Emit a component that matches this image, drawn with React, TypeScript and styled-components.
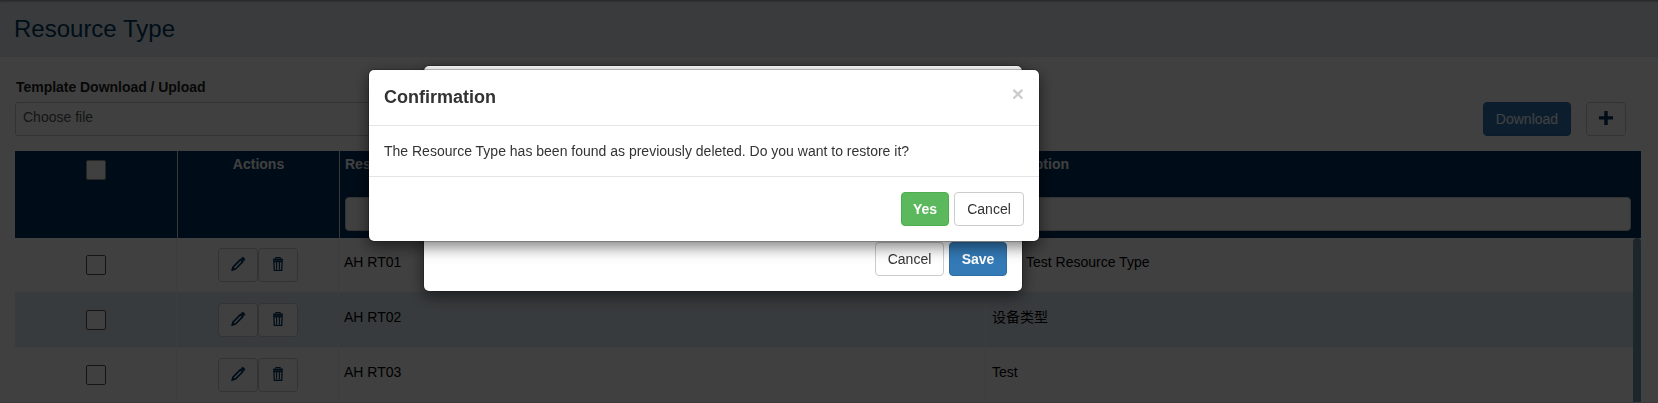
import React from "react";
import styled, { createGlobalStyle, css } from "styled-components";

const Global = createGlobalStyle`
  * { box-sizing: border-box; }
  html, body { margin: 0; height: 100%; overflow: hidden; background: #fff; }
  body {
    font-family: "Liberation Sans", Arial, "Noto Sans CJK SC", sans-serif;
    font-size: 14px;
    line-height: 20px;
    color: #333;
  }
`;

const Page = styled.div`
  height: 403px;
  overflow: hidden;
  display: flex;
  flex-direction: column;
  border-bottom: 1px solid #f4dfe6;
`;

const PageHeader = styled.header`
  height: 57px;
  flex: none;
  padding: 16px 14px 0;
  background: #e6ecf2;
  border-bottom: 1px solid #e2e5ea;
  box-shadow: inset 0 3px 3px -2px rgba(0, 0, 0, 0.45);
`;

const Title = styled.h1`
  margin: 0;
  font-size: 24px;
  line-height: 26px;
  font-weight: 400;
  color: #003a62;
`;

const Content = styled.main`
  flex: 1;
  min-height: 0;
  padding: 20px 17px 0 15px;
  display: flex;
  flex-direction: column;
`;

const FieldLabel = styled.label`
  display: block;
  padding-left: 1px;
  margin-bottom: 5px;
  font-weight: 700;
  letter-spacing: -0.03px;
  color: #222;
`;

const Toolbar = styled.div`
  display: flex;
  gap: 15px;
  height: 34px;
  margin-bottom: 15px;
  padding-right: 15px;
`;

const FileField = styled.div`
  width: 640px;
  margin-right: auto;
  padding: 4px 7px;
  border: 1px solid #ccc;
  border-radius: 3px;
  color: #555;
`;

const Button = styled.button<{ $kind?: "primary" | "success"; $bold?: boolean; $width: number }>`
  width: ${(p) => p.$width}px;
  height: 34px;
  padding: 0;
  display: inline-flex;
  align-items: center;
  justify-content: center;
  border: 1px solid #ccc;
  border-radius: 4px;
  background: #fff;
  color: #333;
  font: inherit;
  font-weight: ${(p) => (p.$bold ? 700 : 400)};
  ${(p) =>
    p.$kind === "primary" &&
    css`
      background: #337ab7;
      border-color: #2e6da4;
      color: #fff;
    `}
  ${(p) =>
    p.$kind === "success" &&
    css`
      background: #5cb85c;
      border-color: #4cae4c;
      color: #fff;
    `}
`;

const TableHead = styled.div`
  flex: none;
  display: grid;
  grid-template-columns: 163px 162px 647px 1fr;
  height: 87px;
  background: #003060;
  color: #fff;
`;

const HeadCell = styled.div<{ $center?: boolean }>`
  display: flex;
  flex-direction: column;
  align-items: ${(p) => (p.$center ? "center" : "stretch")};
  padding: ${(p) => (p.$center ? "3px 0 0" : "3px 10px 0 5px")};
  font-weight: 700;
  border-right: 1px solid #ddd;
  &:last-child {
    border-right: 0;
  }
`;

const HeadText = styled.span`
  height: 20px;
`;

const Filter = styled.div`
  height: 34px;
  margin-top: 23px;
  border: 1px solid #ccc;
  border-radius: 4px;
  background: #fff;
`;

const Checkbox = styled.span<{ $head?: boolean }>`
  display: block;
  width: 20px;
  height: 20px;
  margin-top: ${(p) => (p.$head ? "6px" : "0")};
  border: 1px solid ${(p) => (p.$head ? "#999" : "#555")};
  border-radius: 2px;
  background: #fff;
`;

const TableBody = styled.div`
  flex: 1;
  min-height: 0;
  display: flex;
`;

const Rows = styled.div`
  flex: 1;
  min-width: 0;
`;

const Scrollbar = styled.div`
  width: 8px;
  border-radius: 4px 4px 0 0;
  background: #7899b3;
`;

const Row = styled.div<{ $alt: boolean }>`
  display: grid;
  grid-template-columns: 162px 162px 647px 1fr;
  height: 55px;
  border-top: 1px solid ${(p) => (p.$alt ? "#e2ebf2" : "#f6f8fa")};
  background: ${(p) => (p.$alt ? "#dfebf3" : "#fff")};
  color: #000;
  &:first-child {
    height: 54px;
    border-top: 0;
  }
`;

const Cell = styled.div<{ $center?: boolean }>`
  display: flex;
  align-items: flex-start;
  justify-content: ${(p) => (p.$center ? "center" : "flex-start")};
  padding: ${(p) => (p.$center ? "10px 0 0" : "14px 5px 0")};
  border-right: 1px solid #f0f0f0;
  &:first-child {
    padding-top: 17px;
  }
  &:last-child {
    border-right: 0;
    padding-left: 6px;
  }
`;

const Backdrop = styled.div`
  position: fixed;
  inset: 0;
  background: rgba(0, 0, 0, 0.75);
`;

const Dialog = styled.section<{ $top: number; $width: number; $offset: number; $height?: number }>`
  position: fixed;
  top: ${(p) => p.$top}px;
  left: ${(p) => p.$offset}px;
  width: ${(p) => p.$width}px;
  height: ${(p) => (p.$height ? `${p.$height}px` : "auto")};
  display: flex;
  flex-direction: column;
  border: 1px solid rgba(0, 0, 0, 0.2);
  border-radius: 6px;
  background: #fff;
  background-clip: padding-box;
  box-shadow: 0 5px 15px rgba(0, 0, 0, 0.5);
`;

const DialogHeader = styled.header`
  height: 56px;
  padding: 14px 15px 0;
  display: flex;
  justify-content: space-between;
  border-bottom: 1px solid #e5e5e5;
`;

const DialogTitle = styled.h2`
  margin: 0;
  font-size: 18px;
  line-height: 26px;
  font-weight: 700;
`;

const Close = styled.span`
  font-size: 21px;
  line-height: 19px;
  font-weight: 700;
  color: #ccc;
`;

const DialogBody = styled.div`
  padding: 15px;
`;

const DialogFooter = styled.footer<{ $line?: boolean }>`
  margin-top: auto;
  padding: 15px;
  display: flex;
  justify-content: flex-end;
  gap: 5px;
  border-top: ${(p) => (p.$line ? "1px solid #e5e5e5" : "0")};
`;

const Icon = styled.svg`
  display: block;
  margin-top: -3px;
`;

const Pencil = () => (
  <Icon width="16" height="16" viewBox="0 0 16 16" fill="none" stroke="#003560">
    <path d="M2.4 13.8 3.3 10.8 10.4 3.7 12.6 5.9 5.5 13Z" strokeWidth="1.7" strokeLinejoin="round" />
    <path d="M1.2 15 2.4 10.6 5.8 13.8Z" fill="#003560" stroke="none" />
    <path d="m10.9 2.6 1.2-1.1q.7-.6 1.4 0l1.1 1.1q.6.7 0 1.4l-1.1 1.2Z" fill="#003560" strokeWidth=".6" />
  </Icon>
);

const Trash = () => (
  <Icon width="16" height="16" viewBox="0 0 16 16" fill="none" stroke="#003560">
    <path d="M5.6 2.6V1.5h4.8v1.1" strokeWidth="1" />
    <path d="M4 2.4h8q1 0 1 1v1.3H3V3.400q0-1 1-1Z" fill="#003560" stroke="none" />
    <path d="M3.9 5.600 4.3 14.300h7.400l.4-8.700Z" strokeWidth="1.3" />
    <path d="M6.600 6v7.500M9.400 6v7.500" strokeWidth="1.1" />
  </Icon>
);

const Plus = () => (
  <Icon width="14" height="14" viewBox="0 0 14 14" fill="#003060">
    <path d="M5.300 0h3.400v5.300H14v3.300H8.700V14H5.300V8.600H0V5.300h5.300Z" />
  </Icon>
);

const records = [
  { type: "AH RT01", description: "Hour Test Resource Type" },
  { type: "AH RT02", description: "设备类型" },
  { type: "AH RT03", description: "Test" },
];

export default function App() {
  return (
    <>
      <Global />
      <Page>
        <PageHeader>
          <Title>Resource Type</Title>
        </PageHeader>
        <Content>
          <FieldLabel>Template Download / Upload</FieldLabel>
          <Toolbar>
            <FileField>Choose file</FileField>
            <Button $kind="primary" $width={88}>Download</Button>
            <Button $width={40} aria-label="Add"><Plus /></Button>
          </Toolbar>
          <TableHead>
            <HeadCell $center><Checkbox $head /></HeadCell>
            <HeadCell $center><HeadText>Actions</HeadText></HeadCell>
            <HeadCell>
              <HeadText>Resource Type</HeadText>
              <Filter />
            </HeadCell>
            <HeadCell>
              <HeadText>Description</HeadText>
              <Filter />
            </HeadCell>
          </TableHead>
          <TableBody>
            <Rows>
              {records.map((r, i) => (
                <Row key={r.type} $alt={i % 2 === 1}>
                  <Cell $center><Checkbox /></Cell>
                  <Cell $center>
                    <Button $width={40} aria-label="Edit"><Pencil /></Button>
                    <Button $width={40} aria-label="Delete"><Trash /></Button>
                  </Cell>
                  <Cell>{r.type}</Cell>
                  <Cell>{r.description}</Cell>
                </Row>
              ))}
            </Rows>
            <Scrollbar />
          </TableBody>
        </Content>
      </Page>
      <Backdrop />
      <Dialog $top={65} $offset={423} $width={600} $height={227}>
        <DialogFooter>
          <Button $width={69}>Cancel</Button>
          <Button $kind="primary" $bold $width={58}>Save</Button>
        </DialogFooter>
      </Dialog>
      <Dialog $top={69} $offset={368} $width={672}>
        <DialogHeader>
          <DialogTitle>Confirmation</DialogTitle>
          <Close>×</Close>
        </DialogHeader>
        <DialogBody>
          The Resource Type has been found as previously deleted. Do you want to restore it?
        </DialogBody>
        <DialogFooter $line>
          <Button $kind="success" $bold $width={48}>Yes</Button>
          <Button $width={70}>Cancel</Button>
        </DialogFooter>
      </Dialog>
    </>
  );
}
